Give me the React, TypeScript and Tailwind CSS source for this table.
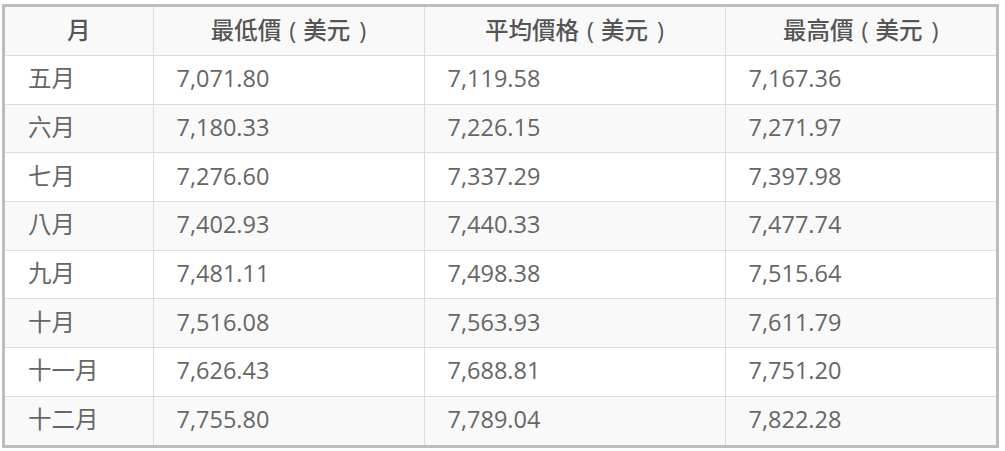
const rows = [
  ['五月', '7,071.80', '7,119.58', '7,167.36'],
  ['六月', '7,180.33', '7,226.15', '7,271.97'],
  ['七月', '7,276.60', '7,337.29', '7,397.98'],
  ['八月', '7,402.93', '7,440.33', '7,477.74'],
  ['九月', '7,481.11', '7,498.38', '7,515.64'],
  ['十月', '7,516.08', '7,563.93', '7,611.79'],
  ['十一月', '7,626.43', '7,688.81', '7,751.20'],
  ['十二月', '7,755.80', '7,789.04', '7,822.28'],
]

const headers = ['最低價', '平均價格', '最高價']

function UsdHeader({ label }: { label: string }) {
  return (
    <>
      {label}
      <span className="pl-[8px] pr-[7px]">(</span>
      美元
      <span className="pl-[9px]">)</span>
    </>
  )
}

export default function App() {
  return (
    <div
      className="min-h-screen bg-white pl-[2px] pt-[4px]"
      style={{ fontFamily: '"Open Sans", "Noto Sans CJK TC", sans-serif' }}
    >
      <div className="w-[997px] border-[3px] border-[#bdbdbd]">
        <table className="w-full border-collapse table-fixed text-[23.5px] text-[#666]">
          <colgroup>
            <col className="w-[148px]" />
            <col className="w-[271px]" />
            <col className="w-[301px]" />
            <col />
          </colgroup>
          <thead>
            <tr className="h-[48.67px] bg-[#f9f9f9] border-b border-[#dddddd]">
              <th className="font-medium text-[#555] text-center p-0">月</th>
              {headers.map((h) => (
                <th
                  key={h}
                  className="font-medium text-[#555] text-center whitespace-nowrap border-l border-[#dddddd] p-0"
                >
                  <UsdHeader label={h} />
                </th>
              ))}
            </tr>
          </thead>
          <tbody>
            {rows.map((r, i) => (
              <tr
                key={i}
                className={
                  (i % 2 === 1 ? 'bg-[#f9f9f9] ' : 'bg-white ') +
                  'h-[48.67px] border-b border-[#dddddd] last:border-b-0'
                }
              >
                {r.map((c, j) => (
                  <td
                    key={j}
                    className="pl-[23px] pb-[2px] leading-none border-l border-[#dddddd] first:border-l-0 font-normal"
                  >
                    {c}
                  </td>
                ))}
              </tr>
            ))}
          </tbody>
        </table>
      </div>
    </div>
  )
}
